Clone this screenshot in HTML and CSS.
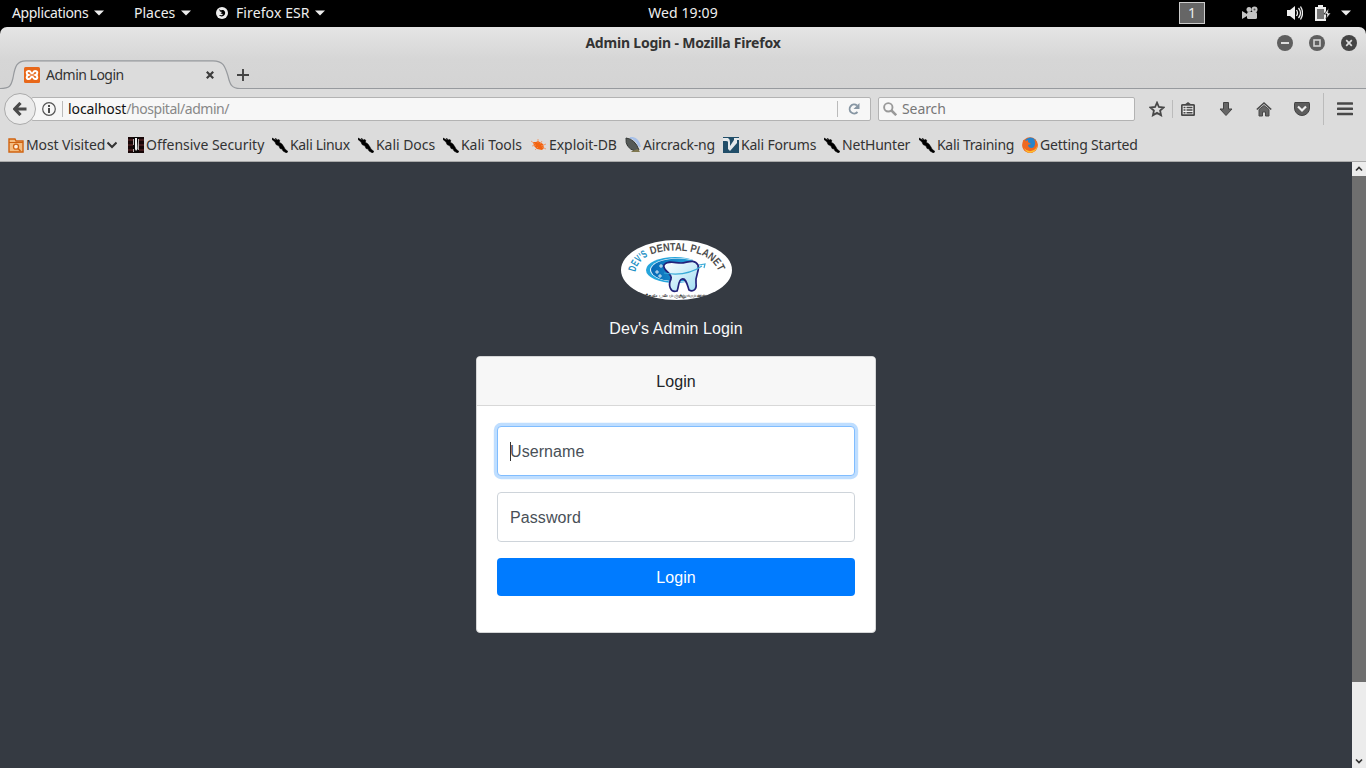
FILE: index.html
```html
<!DOCTYPE html>
<html lang="en">
<head>
<meta charset="utf-8">
<title>Admin Login</title>
<link rel="stylesheet" href="styles.css">
</head>
<body>
<svg width="0" height="0" class="defs">
  <symbol id="kali" viewBox="0 0 16 16"><path d="M0 1l4 2L3.500 1 5 3l2-.5L8 4l-1 1 3 2 2 3 1 2 3 2.500-1.500 1.500L11 14l-1-2-2-.5L7 9 4 7.500 3 5 0 2.500z" stroke="#000" stroke-width=".5"/></symbol>
  <symbol id="down" viewBox="0 0 10 6"><path d="M0 .5h10L5 5.500z"/></symbol>
</svg>
<header class="topbar">
  <div class="menus">
    <span class="m1">Applications</span><svg class="tri"><use href="#down"/></svg>
    <span class="m2">Places</span><svg class="tri"><use href="#down"/></svg>
    <svg class="fx" viewBox="0 0 12 12"><circle cx="6" cy="6" r="6" fill="#eee"/><path d="M3 2l2 1.500C7 2 10 4 9 7c-1 3-5 3-6 1l3 .3 1-1.300-2.500-.6L6 5 4 4.500z" fill="#000"/></svg>
    <span class="m3">Firefox ESR</span><svg class="tri"><use href="#down"/></svg>
  </div>
  <div class="clock">Wed 19:09</div>
  <div class="tray">
    <span class="workspace">1</span>
    <svg class="cam" viewBox="0 0 16 14" fill="#c4c4c4"><circle cx="7" cy="3.500" r="2.500"/><circle cx="12.500" cy="3.500" r="3"/><rect x="5" y="6" width="10" height="7" rx="1.500"/><path d="M0 5l5 3v2l-5 3z"/><circle cx="12.500" cy="3.500" r="1" fill="#555"/></svg>
    <svg class="vol" viewBox="0 0 16 16"><path d="M0 5h3l5-4v14l-5-4H0z" fill="#eee"/><path d="M9.500 5q2 3 0 6M11.500 3q4 5 0 10M13.500 1.500q4 6.500 0 13" fill="none" stroke="#eee" stroke-width="1.300"/></svg>
    <svg class="bat" viewBox="0 0 17 16"><path d="M3 0h5v2h3v14H0V2h3z" fill="#eee"/><path d="M2 4h7v10H2z" fill="#777"/><path d="M14 3l-5 6h3l-1 5 5-6h-3z" fill="#eee" stroke="#000" stroke-width=".7"/></svg>
    <svg class="tri traytri"><use href="#down"/></svg>
  </div>
</header>
<section class="chrome">
  <div class="titlebar">
    <span class="title">Admin Login - Mozilla Firefox</span>
    <div class="winbtns">
      <svg viewBox="0 0 16 16"><circle cx="8" cy="8" r="8" fill="#5f5f5f"/><path d="M4 8h8" stroke="#ddd" stroke-width="2"/></svg>
      <svg viewBox="0 0 16 16"><circle cx="8" cy="8" r="8" fill="#5f5f5f"/><rect x="5" y="5" width="6" height="6" fill="none" stroke="#d2d2d2" stroke-width="1.600"/></svg>
      <svg viewBox="0 0 16 16"><circle cx="8" cy="8" r="8" fill="#454545"/><path d="M5.200 5.200l5.600 5.600M10.800 5.200l-5.600 5.600" stroke="#ddd" stroke-width="1.700"/></svg>
    </div>
  </div>
  <div class="tabs">
    <svg class="tabshape" viewBox="0 0 1366 30" fill="none"><path d="M0 28.500C10 28.500 11 26 13 18C15 6 17 1.500 26 1.500H213C223 1.500 225 6 228 16C230 25 232 28.500 240 28.500H1366V30H0z" fill="#dcdcdc"/><path d="M0 28.500C10 28.500 11 26 13 18C15 6 17 .8 26 .8H213C223 .8 225 6 228 16C230 25 232 28.500 240 28.500H1366" stroke="#979a9e" stroke-width="1.200"/></svg>
    <div class="tab">
      <svg class="fav" viewBox="0 0 16 16"><rect width="16" height="16" rx="1.500" fill="#e8681a"/><path d="M5 4C2 4 2 7 4.500 8C2 9 2 12 5 12C7 12 6.500 9.500 8 9.500S9 12 11 12C14 12 14 9 11.500 8C14 7 14 4 11 4C9 4 9.500 6.500 8 6.500S7 4 5 4z" fill="none" stroke="#fff" stroke-width="2"/></svg>
      <span class="tabname">Admin Login</span>
      <svg class="close" viewBox="0 0 8 8"><path d="M.8.8l6.400 6.400M7.200.8L.8 7.200" stroke="#3c3c3c" stroke-width="2.200"/></svg>
    </div>
    <svg class="plus" viewBox="0 0 12 12"><path d="M6 0v12M0 6h12" stroke="#444" stroke-width="1.900"/></svg>
  </div>
  <div class="navbar">
    <div class="back"><svg viewBox="0 0 14 14" width="14" height="14"><path d="M13.500 7H3M7.500 1L1.700 7l5.800 6" fill="none" stroke="#4a4a4a" stroke-width="3.200"/></svg></div>
    <div class="url">
      <svg class="info" viewBox="0 0 14 14"><circle cx="7" cy="7" r="6.300" fill="none" stroke="#555" stroke-width="1.200"/><path d="M7 3v2M7 6v5" stroke="#444" stroke-width="1.900"/></svg>
      <i class="sep"></i>
      <span class="address"><b>localhost</b>/hospital/admin/</span>
      <i class="sep"></i>
      <svg class="reload" viewBox="0 0 12 12"><path d="M9.500 9A4.500 4.500 0 1 1 9 2.500" fill="none" stroke="#8796a3" stroke-width="1.900"/><path d="M11.500 0v6h-6z" fill="#8796a3"/></svg>
    </div>
    <div class="search"><svg viewBox="0 0 14 14" width="14" height="14" fill="none" stroke="#999"><circle cx="5.300" cy="5.300" r="4.200" stroke-width="1.900"/><path d="M8.500 8.500l4.700 4.700" stroke-width="2.500"/></svg><span>Search</span></div>
    <div class="tools">
      <svg class="star" viewBox="0 0 16 16"><path d="M8 1.700l1.900 4.300 4.700.5-3.500 3.100 1 4.700L8 11.900l-4.100 2.400 1-4.700-3.500-3.100 4.700-.5z" fill="none" stroke="#484848" stroke-width="1.800"/></svg>
      <i></i>
      <svg class="list" viewBox="0 0 14 14"><rect x=".8" y="2.800" width="12.400" height="10.400" rx="1" fill="#f0f0f0" stroke="#484848" stroke-width="1.800"/><path d="M3 3l4-3 4 3zM2.500 4.700h2v1.500h-2zM5.500 4.700h6v1.500h-6zM2.500 7.300h2v1.500h-2zM5.500 7.300h6v1.500h-6zM2.500 9.900h2v1.500h-2zM5.500 9.900h6v1.500h-6z" fill="#484848"/></svg>
      <svg class="dl" viewBox="0 0 14 14"><path d="M4.500.5h5V7H13l-6 6.500L1 7h3.500z" fill="#666" stroke="#444"/></svg>
      <svg class="home" viewBox="0 0 16 14"><path d="M3 7.500l5-4 5 4V14H9.500v-4h-3v4H3z" fill="#666" stroke="#484848"/><path d="M.8 7.500L8 1l7.200 6.500" fill="none" stroke="#484848" stroke-width="1.600"/></svg>
      <svg class="pocket" viewBox="0 0 16 14"><path d="M1 .5h14q.5 0 .5 1V6a7.500 7.500 0 0 1-15 0V1.500q0-1 .5-1z" fill="#5c5c5c" stroke="#444"/><path d="M4 4.500l4 4 4-4" fill="none" stroke="#eee" stroke-width="2.200"/></svg>
      <i class="long"></i>
      <svg class="burger" viewBox="0 0 16 14"><path d="M1 1.500h14M1 6.800h14M1 12h14" stroke="#484848" stroke-width="2.600" stroke-linecap="round"/></svg>
    </div>
  </div>
  <nav class="bookmarks">
    <a class="w1"><svg viewBox="0 0 16 16"><path d="M1 2h6l1 2h7v11H1z" fill="#f4bd80" stroke="#cf6310" stroke-width="1.400"/><path d="M1 5.500h14" stroke="#cf6310"/><circle cx="8" cy="9.700" r="2.500" fill="#fff0df" stroke="#cf6310" stroke-width="1.300"/><path d="M10 11.500l2.500 2.500" stroke="#cf6310" stroke-width="1.500"/></svg><span>Most Visited</span><svg class="chev" viewBox="0 0 10 8"><path d="M.5 1.500L5 6l4.500-4.500" fill="none" stroke="#333" stroke-width="2"/></svg></a>
    <a class="w2"><svg viewBox="0 0 16 16"><path d="M0 0h16v16H0z" fill="#180708"/><path d="M0 3h16M0 8h16M0 13h16" stroke="#4d2020" stroke-width="1.500"/><path d="M5 0h6v16H5z" fill="#0b0808"/><path d="M7 1h2v3l.5 8L8 14l-1-2z" fill="#f4f4f4"/><path d="M5.500 2v6M5.500 12v3M10.500 2v11" stroke="#b8b0b0"/></svg><span>Offensive Security</span></a>
    <a class="w3"><svg><use href="#kali"/></svg><span>Kali Linux</span></a>
    <a class="w4"><svg><use href="#kali"/></svg><span>Kali Docs</span></a>
    <a class="w5"><svg><use href="#kali"/></svg><span>Kali Tools</span></a>
    <a class="w6"><svg viewBox="0 0 16 16"><path d="M2 5l3 0 2-1 5 3 1 4-2 2-5-1-3-3z" fill="#f26411"/><path d="M0 4l4 3M1 9l4-1M4 13l3-3M7 2v4M11 4l-2 3M15 7l-5 2M15 12l-4-2" stroke="#f58b52" stroke-width=".8"/></svg><span>Exploit-DB</span></a>
    <a class="w7"><svg viewBox="0 0 16 16"><path d="M5 1q8-1 10 9M8 2q4 1 6 7" fill="none" stroke="#a8c1e9" stroke-width="2"/><path d="M1 1Q10 2 14 13L10 14Q0 11 1 1z" fill="#555a58" stroke="#343836"/><path d="M7 14l6-2 2 3H6z" fill="#807850"/></svg><span>Aircrack-ng</span></a>
    <a class="w8"><svg viewBox="0 0 16 16"><path d="M0 0h16v16H0z" fill="#214e69"/><path d="M0 1h5q2 1 2 4v4l4-6V1h5v2h-2v3l-7 8-2-2V5q0-1-2-1H0z" fill="#e4e9ec"/></svg><span>Kali Forums</span></a>
    <a class="w9"><svg><use href="#kali"/></svg><span>NetHunter</span></a>
    <a class="w10"><svg><use href="#kali"/></svg><span>Kali Training</span></a>
    <a class="w11"><svg viewBox="0 0 16 16"><circle cx="8" cy="8" r="7.800" fill="#ef6820"/><circle cx="8.500" cy="6.500" r="6" fill="#2783ca"/><path d="M1 3l3 1 2-1v2l3 2-3 1c0 3 4 4 6 2 2-3 1-6 0-8 4 3 5 8 1 12-5 4-12 1-12.500-5z" fill="#ef6820"/><path d="M2 11q4 5 10 2 3-2 3.500-5-.5 7-7 7.800Q4 16 2 11z" fill="#ffc02e"/></svg><span>Getting Started</span></a>
  </nav>
</section>
<div class="view">
  <main class="page">
    <svg class="logo" viewBox="0 0 112 60">
      <defs><clipPath id="oval"><ellipse cx="56.500" cy="30" rx="55.500" ry="30"/></clipPath><linearGradient id="disk"><stop stop-color="#0668b6"/><stop offset="1" stop-color="#32b7e5"/></linearGradient>
      <linearGradient id="enamel" x2="1" y2="1"><stop stop-color="#fff"/><stop offset="1" stop-color="#9edcf3"/></linearGradient>
      <path id="arcl" d="M15.500 32Q17 22 29 15.500"/><path id="arcr" d="M31 14.500Q50 8 72 12Q94 17 99 33"/></defs>
      <g clip-path="url(#oval)"><rect width="112" height="60" fill="#fff"/>
      <ellipse cx="55" cy="30" rx="29" ry="13" fill="#25a5dc"/><ellipse cx="58" cy="30" rx="28" ry="12" fill="#fff"/><ellipse cx="58" cy="30" rx="27" ry="11.500" fill="url(#disk)"/>
      <path d="M72 16h20v28H78z" fill="#fff"/>
      <path d="M44 25C48 20 55 23 61 23S74 18 78 25C80 31 75 35 76 43C77 50 73 52 69 50C67 44 66 38 62 39S59 47 57 51C50 53 48 45 51 39C53 33 42 31 44 25z" fill="url(#enamel)" stroke="#23227b" stroke-width="1.700"/>
      <path d="M44 33Q66 37 82 26M79 25l6-1-1 4" fill="none" stroke="#39aad7" stroke-width="1.200"/>
      <path d="M35 32h4M37 30v4M39 26h4M41 24v4M38 36h4M40 34v4" stroke="#fff" stroke-width=".8"/>
      <text class="arctext" fill="#1c91c5"><textPath href="#arcl" textLength="21" lengthAdjust="spacingAndGlyphs">DEV'S</textPath></text>
      <text class="arctext" fill="#4c4c4c"><textPath href="#arcr" textLength="76" lengthAdjust="spacingAndGlyphs">DENTAL PLANET</textPath></text>
      <text x="24" y="57" class="tamil" textLength="64" lengthAdjust="spacingAndGlyphs">தேவ் பல் மருத்துவமனை</text></g>
    </svg>
    <div class="brand">Dev's Admin Login</div>
    <form class="card">
      <div class="cardhead">Login</div>
      <div class="cardbody">
        <div class="field"><input class="control focused" placeholder="Username"><i class="caret"></i></div>
        <div class="field"><input class="control" type="password" placeholder="Password"></div>
        <button type="button" class="submit">Login</button>
      </div>
    </form>
  </main>
  <aside class="scroll">
    <svg viewBox="0 0 14 14"><path d="M4 8.500l3-3 3 3" fill="none" stroke="#333" stroke-width="1.700"/></svg>
    <div class="thumb"></div>
    <svg viewBox="0 0 14 14"><path d="M4 5.500l3 3 3-3" fill="none" stroke="#333" stroke-width="1.700"/></svg>
  </aside>
</div>
</body>
</html>
```
FILE: styles.css
```css
* { box-sizing: border-box; }
body { margin: 0; width: 1366px; height: 768px; overflow: hidden; display: flex; flex-direction: column; background: #000; font: 14px/20px "Noto Sans", sans-serif; color: #333; }
svg { display: block; flex: none; }
.defs { position: absolute; }
span { white-space: nowrap; }
.topbar { height: 27px; padding-bottom: 1px; flex: none; display: grid; grid-template-columns: 1fr 80px 1fr; align-items: center; color: #eee; }
.menus { display: flex; align-items: center; padding-left: 12px; letter-spacing: -.35px; }
.menus span { flex: none; }
.m1 { width: 82px; }
.m2 { width: 47px; margin-left: 30px; letter-spacing: 0; }
.m3 { width: 79px; letter-spacing: .1px; }
.tri { width: 10px; height: 6px; fill: #eee; }
.fx { width: 12px; height: 12px; margin: 0 8px 0 25px; }
.clock { text-align: center; letter-spacing: .1px; }
.tray { display: flex; align-items: center; justify-content: flex-end; padding-right: 15px; }
.workspace { width: 26px; height: 22px; border: 1px solid #ccc; background: #666; text-align: center; line-height: 20px; margin-right: 37px; }
.cam { width: 16px; height: 14px; margin-right: 29px; }
.vol { width: 16px; height: 16px; margin-right: 12px; }
.bat { width: 17px; height: 16px; margin-right: 9px; }
.chrome { height: 135px; flex: none; display: flex; flex-direction: column; border-radius: 7px 7px 0 0; background: linear-gradient(#e5e5e5, #d6d6d6 32px, #d4d4d4 61px, #dcdcdc 62px); border-bottom: 1px solid #aaa; }
.titlebar { height: 33px; padding-bottom: 1px; display: grid; grid-template-columns: 1fr auto 1fr; align-items: center; }
.title { grid-column: 2; font-weight: 700; letter-spacing: -.2px; }
.winbtns { display: flex; justify-content: flex-end; gap: 16px; padding-right: 9px; }
.winbtns svg { width: 16px; height: 16px; }
.tabs { height: 30px; display: flex; align-items: center; position: relative; }
.tabshape { position: absolute; inset: 0; width: 1366px; height: 30px; }
.tab { position: relative; width: 214px; display: flex; align-items: center; padding-left: 24px; }
.fav { width: 16px; height: 16px; }
.tabname { margin-left: 6px; flex: 1; letter-spacing: -.5px; }
.close { width: 8px; height: 8px; }
.plus { width: 12px; height: 12px; margin-left: 23px; position: relative; }
.navbar { height: 38px; display: flex; align-items: center; }
.back { width: 32px; height: 32px; margin-left: 4px; border: 1px solid #aaa; border-radius: 50%; background: #ebebeb; display: grid; place-items: center; z-index: 1; }
.url { width: 840px; height: 24px; margin-left: -5px; padding: 0 10px; border: 1px solid #b3b3b3; border-radius: 2px; background: #f7f7f7; display: flex; align-items: center; }
.info { width: 14px; height: 14px; margin-right: 6px; }
.sep { width: 1px; height: 16px; background: #bbb; }
.address { margin-left: 5px; flex: 1; color: #888; letter-spacing: -.45px; }
.address b { color: #111; font-weight: 400; letter-spacing: -.1px; }
.reload { width: 12px; height: 12px; margin-left: 10px; }
.search { width: 257px; height: 24px; margin-left: 7px; padding-left: 4px; border: 1px solid #b3b3b3; border-radius: 2px; background: #f7f7f7; display: flex; align-items: center; gap: 5px; color: #777; letter-spacing: -.1px; }
.tools { display: flex; align-items: center; margin-left: 14px; }
.tools i { width: 1px; height: 18px; background: #bbb; margin: 0 8px 0 7px; }
.tools .long { height: 32px; margin: 0 13px; }
.star, .home, .pocket, .burger { width: 16px; height: 16px; }
.list { width: 14px; height: 14px; margin-right: 24px; }
.dl { width: 14px; height: 14px; margin-right: 23px; }
.home { margin-right: 22px; }
.bookmarks { display: flex; padding-left: 8px; height: 33px; align-items: center; }
.bookmarks a { display: flex; align-items: center; gap: 2px; flex: none; letter-spacing: -.2px; }
.bookmarks a svg { width: 16px; height: 16px; }
.bookmarks a .chev { width: 10px; height: 8px; }
.bookmarks .w1 { width: 120px; letter-spacing: -.1px; }
.bookmarks .w2 { width: 144px; letter-spacing: -.02px; }
.bookmarks .w3 { width: 86px; letter-spacing: -.33px; }
.w4 { width: 85px; }
.w5 { width: 88px; }
.w6 { width: 94px; }
.w7 { width: 98px; }
.w8 { width: 101px; }
.w9 { width: 95px; }
.bookmarks .w10 { width: 103px; letter-spacing: -.3px; }
.bookmarks .w5, .bookmarks .w4, .bookmarks .w6 { letter-spacing: -.05px; }
.view { flex: 1; display: flex; background: #353a42; }
.page { flex: 1; padding-top: 78px; display: flex; flex-direction: column; align-items: center; font: 16px/24px "Liberation Sans", Arial, sans-serif; letter-spacing: .08px; color: #212529; }
.logo { width: 112px; height: 60px; letter-spacing: 0; }
.arctext { font: bold 11px "Liberation Sans", sans-serif; }
.tamil { font: bold 5px "Noto Sans", sans-serif; fill: #222; }
.brand { margin: 17px 0 15px; color: #f8f9fa; }
.card { width: 400px; height: 277px; border: 1px solid #d5d6d7; border-radius: 4px; background: #fff; overflow: hidden; }
.cardhead { height: 49px; line-height: 50px; text-align: center; background: #f7f7f7; border-bottom: 1px solid #d8d8d8; }
.cardbody { padding: 20px; display: flex; flex-direction: column; gap: 16px; }
.field { height: 50px; position: relative; }
.control { width: 100%; height: 50px; padding: 8px 12px 6px; border: 1px solid #ced4da; border-radius: 4px; font: inherit; letter-spacing: inherit; outline: 0; }
.control::placeholder { color: #495057; opacity: 1; }
.focused { border-color: #80bdff; box-shadow: 0 0 0 3.2px #bfdeff; }
.caret { position: absolute; left: 13px; top: 16px; width: 1px; height: 19px; background: #333; }
.submit { height: 38px; padding: 2px 0 0; border: 0; border-radius: 4px; background: #007bff; color: #fff; font: inherit; letter-spacing: inherit; }
.scroll { width: 14px; background: #ececec; display: flex; flex-direction: column; }
.scroll svg { width: 14px; height: 14px; }
.thumb { height: 506px; margin-bottom: auto; background: #6f6f6f; }
```
